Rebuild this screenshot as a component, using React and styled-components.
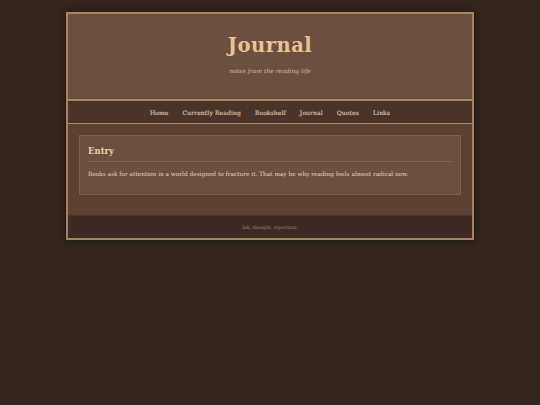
import React from "react";
import styled, { createGlobalStyle } from "styled-components";

const Global = createGlobalStyle`
  html, body { margin: 0; padding: 0; background: #33241d; }
  body { font-family: "DejaVu Serif", "Liberation Serif", serif; }
  * { box-sizing: border-box; }
`;

const Page = styled.div`
  padding: 12px 66px;
`;

const Frame = styled.div`
  width: 408px;
  border: 2px solid #a8845f;
  box-shadow: 0 0 8px rgba(0,0,0,0.45);
  background: #5c4133;
`;

const Header = styled.header`
  background: #6b4f3f;
  height: 85px;
  display: flex;
  flex-direction: column;
  align-items: center;
  padding-top: 19px;
`;

const Title = styled.h1`
  margin: 0;
  font-size: 19.5px;
  font-weight: bold;
  color: #e8c396;
  letter-spacing: 0.5px;
  line-height: 26px;
`;

const Subtitle = styled.p`
  margin: 8px 0 0;
  font-size: 6px;
  line-height: 8px;
  font-style: italic;
  color: #d9bea0;
`;

const Nav = styled.nav`
  background: #4a3329;
  border-top: 2px solid #a8845f;
  border-bottom: 1px solid #a8845f;
  height: 25px;
  display: flex;
  justify-content: center;
  align-items: center;
  gap: 14px;
`;

const NavLink = styled.a`
  font-size: 6px;
  font-weight: normal;
  letter-spacing: 0.12px;
  color: #d8c3ad;
  text-decoration: none;
  -webkit-text-stroke: 0.15px #d8c3ad;
`;

const Main = styled.main`
  padding: 11px 11px 20px;
`;

const Card = styled.section`
  background: #6b4f3f;
  border: 1px solid #7e5e48;
  padding: 8px 8px 16px;
`;

const CardTitle = styled.h2`
  margin: 0;
  font-size: 8.5px;
  line-height: 14px;
  font-weight: bold;
  color: #eccda4;
  padding-bottom: 3px;
  border-bottom: 1px solid #84654d;
`;

const CardText = styled.p`
  margin: 8px 0 0;
  font-size: 5.8px;
  line-height: 8px;
  color: #e3d3c0;
`;

const Footer = styled.footer`
  background: #3e2a22;
  border-top: 1px solid #4a342a;
  height: 23px;
  display: flex;
  align-items: center;
  justify-content: center;
  padding-top: 1px;
  font-size: 4.6px;
  color: #a08473;
`;

const links = ["Home", "Currently Reading", "Bookshelf", "Journal", "Quotes", "Links"];

export default function App() {
  return (
    <>
      <Global />
      <Page>
        <Frame>
          <Header>
            <Title>Journal</Title>
            <Subtitle>notes from the reading life</Subtitle>
          </Header>
          <Nav>
            {links.map((l) => (
              <NavLink key={l} href="#">{l}</NavLink>
            ))}
          </Nav>
          <Main>
            <Card>
              <CardTitle>Entry</CardTitle>
              <CardText>
                Books ask for attention in a world designed to fracture it. That may be why reading feels almost radical now.
              </CardText>
            </Card>
          </Main>
          <Footer>Ink, thought, repetition.</Footer>
        </Frame>
      </Page>
    </>
  );
}
